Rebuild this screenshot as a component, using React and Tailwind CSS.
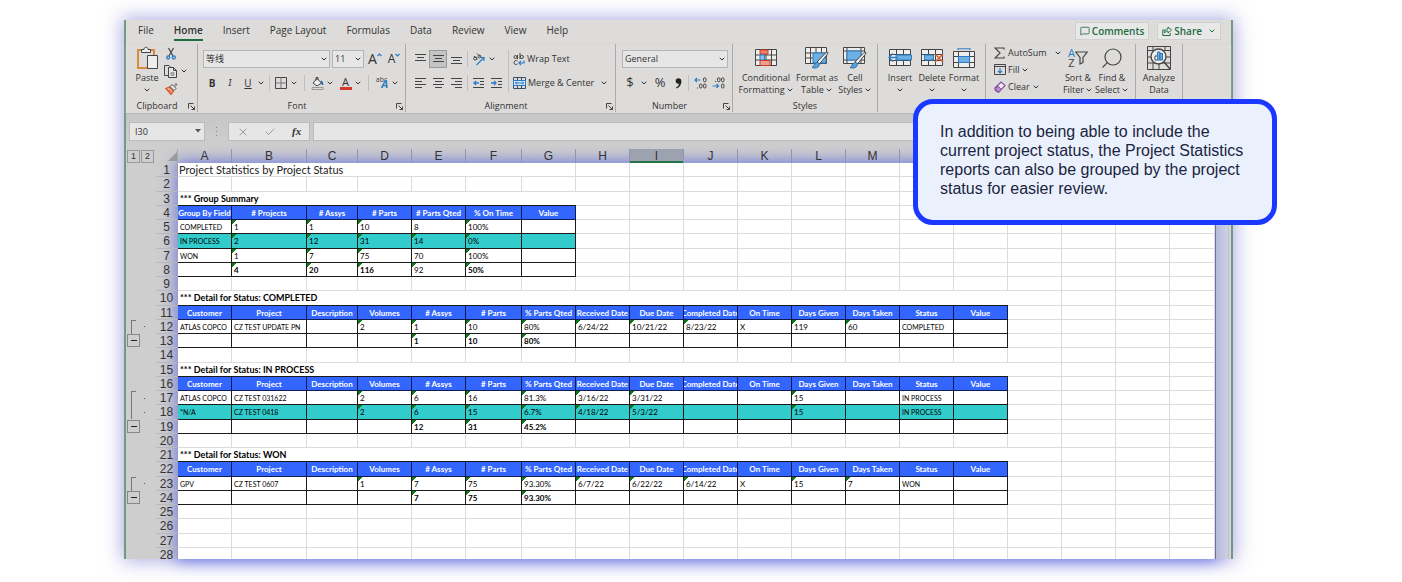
import React from "react";
import clsx from "clsx";
import { ChevronDown, Search, X, Check, MessageSquare } from "lucide-react";

const TABS = ["File", "Home", "Insert", "Page Layout", "Formulas", "Data", "Review", "View", "Help"];

const COLUMNS = "ABCDEFGHIJKLMNOPQRS".split("");

// Letters past this column sit behind the callout
const LAST_LETTER = "M";

const COLUMN_WIDTHS = [
  "w-[54px]", "w-[75px]", "w-[51px]", "w-[54px]", "w-[54px]", "w-[56px]", "w-[54px]",
  "w-[54px]", "w-[54px]", "w-[54px]", "w-[54px]", "w-[54px]", "w-[54px]", "w-[54px]",
  "w-[54px]", "w-[54px]", "w-[54px]", "w-[54px]", "w-auto",
];

const SUMMARY_HEAD = ["Group By Field", "# Projects", "# Assys", "# Parts", "# Parts Qted", "% On Time", "Value"];

const DETAIL_HEAD = [
  "Customer", "Project", "Description", "Volumes", "# Assys", "# Parts", "% Parts Qted", "Received Date",
  "Due Date", "Completed Date", "On Time", "Days Given", "Days Taken", "Status", "Value",
];

// A leading "'" marks a number stored as text, "!" marks bold
const ROWS = [
  { kind: "title", span: 6, text: "Project Statistics by Project Status" },
  { kind: "blank" },
  { kind: "section", span: 7, text: "*** Group Summary" },
  { kind: "head", cells: SUMMARY_HEAD },
  { kind: "data", cells: ["COMPLETED", "'1", "'1", "'10", "8", "'100%", ""] },
  { kind: "data", teal: true, cells: ["IN PROCESS", "'2", "'12", "'31", "'14", "'0%", ""] },
  { kind: "data", cells: ["WON", "'1", "'7", "'75", "70", "'100%", ""] },
  { kind: "data", cells: ["", "'!4", "'!20", "'!116", "'92", "'!50%", ""] },
  { kind: "blank" },
  { kind: "section", span: 15, text: "*** Detail for Status: COMPLETED" },
  { kind: "head", cells: DETAIL_HEAD },
  { kind: "data", outline: "start", cells: ["ATLAS COPCO", "CZ TEST UPDATE PN", "", "'2", "'1", "'10", "'80%", "'6/24/22", "'10/21/22", "'8/23/22", "X", "'119", "'60", "COMPLETED", ""] },
  { kind: "data", outline: "end", cells: ["", "", "", "", "'!1", "'!10", "'!80%", "", "", "", "", "", "", "", ""] },
  { kind: "blank" },
  { kind: "section", span: 15, text: "*** Detail for Status: IN PROCESS" },
  { kind: "head", cells: DETAIL_HEAD },
  { kind: "data", outline: "start", cells: ["ATLAS COPCO", "CZ TEST 031622", "", "'2", "'6", "'16", "'81.3%", "'3/16/22", "'3/31/22", "", "", "'15", "", "IN PROCESS", ""] },
  { kind: "data", outline: "middle", teal: true, cells: ["*N/A", "CZ TEST 0418", "", "'2", "'6", "'15", "'6.7%", "'4/18/22", "'5/3/22", "", "", "'15", "", "IN PROCESS", ""] },
  { kind: "data", outline: "end", cells: ["", "", "", "", "'!12", "'!31", "'!45.2%", "", "", "", "", "", "", "", ""] },
  { kind: "blank" },
  { kind: "section", span: 15, text: "*** Detail for Status: WON" },
  { kind: "head", cells: DETAIL_HEAD },
  { kind: "data", outline: "start", cells: ["GPV", "CZ TEST 0607", "", "'1", "'7", "'75", "'93.30%", "'6/7/22", "'6/22/22", "'6/14/22", "X", "'15", "'7", "WON", ""] },
  { kind: "data", outline: "end", cells: ["", "", "", "", "'!7", "'!75", "'!93.30%", "", "", "", "", "", "", "", ""] },
  { kind: "blank" },
  { kind: "blank" },
  { kind: "blank" },
  { kind: "blank" },
];

/* ---------- Icons ---------- */

const Chevron = ({ className }) => (
  <ChevronDown className={clsx("w-2 h-2 shrink-0", className)} strokeWidth={3} />
);

const Svg = ({ w, h, children }) => (
  <svg width={w} height={h} viewBox={`0 0 ${w} ${h}`} fill="none" stroke="#444" className="shrink-0">
    {children}
  </svg>
);

const PasteIcon = () => (
  <Svg w={22} h={24}>
    <path d="M7 4H2v18h9M14 4h4v5" stroke="#d98a3d" strokeWidth="2" />
    <path d="M5.500 6.500v-3h2.500c0-3 4-3 4 0h2.500v3z" fill="#eee" />
    <path d="M11.500 9.500h10v13h-10z" fill="#eee" />
  </Svg>
);

const CutIcon = () => (
  <Svg w={10} h={13}>
    <path d="M2.500 1l4.500 8M7.500 1L3 9" strokeWidth="1.200" />
    <circle cx="2.200" cy="10.500" r="1.500" stroke="#2b7cc4" strokeWidth="1.300" />
    <circle cx="7.800" cy="10.500" r="1.500" stroke="#2b7cc4" strokeWidth="1.300" />
  </Svg>
);

const CopyIcon = () => (
  <Svg w={14} h={13}>
    <path d="M4.500 10.500h-4v-10H5l2 2" />
    <path d="M4.500 2.500h5l3 3v7h-8zM9.500 2.500v3h3" fill="#e6e6e6" />
    <path d="M6.500 8h4M6.500 10h4" strokeWidth=".8" />
  </Svg>
);

const BrushIcon = () => (
  <Svg w={13} h={12}>
    <path d="M.8 5.500L4.500 4l4 4-2.500 3.500z" fill="#f0b090" stroke="#d9541e" strokeWidth="1.200" />
    <path d="M3 8.500l2-1.500M4.500 10l1.500-2" stroke="#d9541e" />
    <path d="M5 3.500l4 4 2-2-1.500-1.500L12 1.500 11 .6 8.500 3 7 1.700z" fill="#eee" stroke="#555" />
  </Svg>
);

const GrowFont = ({ up }) => (
  <span className="flex items-start text-[#333]">
    <span className={up ? "text-[14px] leading-4" : "text-[12px] leading-4"}>A</span>
    <svg width="5" height="4" viewBox="0 0 5 4" fill="none" stroke="#2b7cc4" className="mt-0.5">
      <path d={up ? "M.5 3l2-2 2 2" : "M.5 1l2 2 2-2"} strokeWidth="1.200" />
    </svg>
  </span>
);

const BordersIcon = () => (
  <Svg w={12} h={12}>
    <path d="M.5.5h11v11H.5z" />
    <path d="M6 .5v11M.5 6h11" stroke="#777" />
  </Svg>
);

const FillColorIcon = () => (
  <Svg w={13} h={13}>
    <path d="M6 1.500L10.500 6 6 9 2 6z" fill="#eee" />
    <path d="M5 3.500V.5h2v2.500" />
    <path d="M10 4c1 1.500 2 2.500 1.500 4" stroke="#2b5f9e" strokeWidth="1.800" />
    <path d="M1 10.500h11v2H1z" fill="#ddd" stroke="#888" strokeWidth=".8" />
  </Svg>
);

const PhoneticIcon = () => (
  <span className="flex items-start text-[#444]">
    <span className="text-[7px] leading-2">abc</span>
    <span className="-ml-1.5 mt-0.5 text-[11px] leading-3 italic font-bold text-[#2b7cc4]">A</span>
  </span>
);

const LINES = {
  top: "M0 1.500h11M2 4.500h7M0 7.500h11",
  middle: "M0 2.500h11M2 5.500h7M0 8.500h11",
  bottom: "M0 4.500h11M2 7.500h7M0 10.500h11",
  left: "M0 1.500h11M0 4.500h7M0 7.500h11M0 10.500h7",
  center: "M0 1.500h11M2 4.500h7M0 7.500h11M2 10.500h7",
  right: "M0 1.500h11M4 4.500h7M0 7.500h11M4 10.500h7",
};

const LinesIcon = ({ type }) => (
  <Svg w={11} h={12}>
    <path d={LINES[type]} />
  </Svg>
);

const IndentIcon = ({ out }) => (
  <Svg w={12} h={12}>
    <path d="M0 1.500h11M7 4.500h4M7 7.500h4M0 10.500h11" />
    <path
      d={out ? "M6 6H1M3 4L1 6l2 2" : "M0 6h5M3 4l2 2-2 2"}
      stroke="#2b7cc4"
      strokeWidth="1.300"
    />
  </Svg>
);

const OrientationIcon = () => (
  <Svg w={14} h={13}>
    <circle cx="3.200" cy="5.500" r="1.600" />
    <path d="M2 3l3.500 3.500M5 .5l4 4" />
    <circle cx="7.500" cy="3.500" r="1.400" />
    <path d="M4.500 12L12 4.500M8.500 4.500H12V8" stroke="#2b7cc4" strokeWidth="1.200" />
  </Svg>
);

const WrapIcon = () => (
  <Svg w={12} h={13}>
    <circle cx="2.500" cy="4" r="1.500" />
    <path d="M4.500 2v4M7 0v6M4.500 8C3 7 1 7.500 1 9.500s2 2.500 3.500 1.500" />
    <circle cx="8.800" cy="4" r="1.600" />
    <path d="M11 7.500v2.500H6M8 8l-2 2 2 2" stroke="#2b7cc4" strokeWidth="1.200" />
  </Svg>
);

const MergeIcon = () => (
  <Svg w={13} h={12}>
    <path d="M.5.5h12v11H.5zM4.500.5v3M8.500.5v3M4.500 8.500v3M8.500 8.500v3" stroke="#3b4f66" />
    <path d="M.5 3.500h12v5H.5z" fill="#d8e8f6" stroke="#2b7cc4" />
    <path d="M2 6h9M4 4.500L2.500 6 4 7.500M9 4.500L10.500 6 9 7.500" stroke="#2b7cc4" />
  </Svg>
);

const DecimalIcon = ({ more }) => (
  <Svg w={13} h={12}>
    <path
      d={more ? "M6.500 3H.8M3 1L1 3l2 2" : "M.5 9h6M4.500 7l2 2-2 2"}
      stroke="#2b7cc4"
      strokeWidth="1.200"
    />
    <rect x="9.500" y=".8" width="2.500" height="4" rx="1.200" />
    <rect x="9.500" y="7" width="2.500" height="4" rx="1.200" />
    {more ? <rect x="5.500" y="7" width="2.500" height="4" rx="1.200" /> : <rect x="5.500" y=".8" width="2.500" height="4" rx="1.200" />}
    <path d={more ? "M3 11h1" : "M3 4.500h1"} />
  </Svg>
);

const GRID = "M.5.5h21v16H.5zM.5 6h21M.5 11h21M5.500.5v16M11 .5v16M16.500.5v16";

const ConditionalIcon = () => (
  <Svg w={22} h={18}>
    <path d={GRID} fill="#eee" />
    <path d="M5 1h8v4H5z" fill="#e8836f" stroke="#cf3a24" />
    <path d="M5 6h4.500v5H5z" fill="#8fc1ea" stroke="#2b7cc4" />
    <path d="M5 11.500h10v5H5z" fill="#e8a08f" stroke="#cf3a24" />
  </Svg>
);

const BrushOverlay = () => (
  <>
    <path d="M12 15L21 5.500c1.500-1.200 2.500 0 1.500 1.500L14.500 17z" fill="#eee" stroke="#444" />
    <path d="M7 20.500c2 0 2-5 5-5s3 3 1 4.500-4 1-6 .5z" fill="#5aa2dc" stroke="#2b6ea8" />
  </>
);

const FormatTableIcon = () => (
  <Svg w={24} h={22}>
    <path d={GRID} fill="#eee" />
    <path d="M8 6h13v10H8z" fill="#6fb0e4" stroke="#2b7cc4" />
    <BrushOverlay />
  </Svg>
);

const CellStylesIcon = () => (
  <Svg w={24} h={22}>
    <path d="M.5.500h21v16H.500zM.500 4h21M.500 13h21M4 .500v16M18 .500v16" fill="#eee" />
    <path d="M4 4h14v9H4z" fill="#6fb0e4" stroke="#2b7cc4" />
    <BrushOverlay />
  </Svg>
);

const InsertIcon = () => (
  <Svg w={24} h={18}>
    <path d="M1.500.5h21v16h-21zM8.500.5v16M15.500.5v16M1.500 5.500h21M1.500 11.500h21" fill="#eee" />
    <path d="M8 6h15.500v5H8z" fill="#6fb0e4" stroke="#2b7cc4" />
    <path d="M10 8.500H1M5 4.500l-4 4 4 4" stroke="#2b7cc4" strokeWidth="1.300" />
  </Svg>
);

const DeleteIcon = () => (
  <Svg w={23} h={18}>
    <path d="M.5.5h21v16H.5zM7.500.5v16M14.500.5v16M.5 5.500h21M.5 11.500h21" fill="#eee" />
    <path d="M3.500 6h9v5h-9z" fill="#6fb0e4" stroke="#2b7cc4" />
    <path d="M14 5l8 8M22 5l-8 8" stroke="#dd5a2b" strokeWidth="1.500" />
  </Svg>
);

const FormatIcon = () => (
  <Svg w={22} h={21}>
    <path d="M5 .8h12M5 0v2M17 0v2" stroke="#2b7cc4" />
    <path d="M.5 3.500h21v16H.5zM5.500 3.500v16M16.500 3.500v16M.5 8.500h21M.5 14.500h21" fill="#eee" />
    <path d="M5.500 8.500h11v6h-11z" fill="#6fb0e4" stroke="#2b7cc4" />
  </Svg>
);

const SumIcon = () => (
  <Svg w={11} h={12}>
    <path d="M10 2.500V1H1l5 5-5 5h9V9.500" strokeWidth="1.200" />
  </Svg>
);

const FillIcon = () => (
  <Svg w={12} h={11}>
    <path d="M.5.500h11v10H.500zM.500 2.500h11" />
    <path d="M6 4v5M4 7l2 2 2-2" stroke="#2b7cc4" strokeWidth="1.200" />
  </Svg>
);

const EraserIcon = () => (
  <Svg w={12} h={12}>
    <path d="M1 7l6-6 4 3.500-6 6.500H3.500L1 9z" fill="#eee" stroke="#8a4aa0" strokeWidth="1.200" />
    <path d="M1.500 7.500L4 5l3.500 3.500L5 11H3.500z" fill="#b98cc8" stroke="#8a4aa0" />
  </Svg>
);

const SortIcon = () => (
  <span className="flex items-center">
    <span className="flex flex-col text-[11px] leading-[10px]">
      <span className="text-[#2b7cc4]">A</span>
      <span className="text-[#444]">Z</span>
    </span>
    <Svg w={13} h={14}>
      <path d="M.8 1h11.400L8 6.500v5L5 13V6.500z" strokeWidth="1.200" />
    </Svg>
  </span>
);

const AnalyzeIcon = () => (
  <Svg w={24} h={24}>
    <path d="M.5.5h23v23H.500zM.5 4.500h23M.500 11h23M.500 17h23M6 17v6M12 17v6M6 .5v4M18 .5v4" />
    <circle cx="11.500" cy="10.500" r="7.500" fill="#eee" strokeWidth="1.300" />
    <path d="M8 10h2.500v4H8z" fill="#fff" />
    <path d="M10.500 6h2.500v8h-2.500z" fill="#6fb0e4" stroke="#2b7cc4" />
    <path d="M13 7.500h2.500V14H13z" fill="#6fb0e4" stroke="#2b6ea8" />
    <path d="M17 16l6 7" strokeWidth="1.500" />
  </Svg>
);

const ShareIcon = () => (
  <svg width="10" height="10" viewBox="0 0 10 10" fill="none" stroke="currentColor" className="shrink-0">
    <path d="M3 4H.8v5.500h7.400V7" />
    <path d="M2.500 7c0-3 1.500-4 3.500-4V1l3.500 3L6 7V5C4.500 5 3.500 5.500 2.500 7z" strokeWidth=".9" />
  </svg>
);

const LauncherIcon = () => (
  <Svg w={7} h={7}>
    <path d="M.5 5.500v-5h5M2.500 2.500l4 4M6.500 3.500v3h-3" />
  </Svg>
);

/* ---------- Ribbon ---------- */

const Divider = ({ className }) => <span className={clsx("w-px shrink-0 bg-[#bfbfbf]", className)} />;

const Group = ({ label, launcher, className, children }) => (
  <section className={clsx("flex flex-col h-[68px] shrink-0 border-r border-[#aaa]", className)}>
    <div className="flex h-14">{children}</div>
    <div className="flex items-center h-3 text-[9px] leading-3">
      <span className="flex-1 text-center">{label}</span>
      {launcher && (
        <button aria-label={`${label} settings`} className="w-[9px]">
          <LauncherIcon />
        </button>
      )}
    </div>
  </section>
);

const BigButton = ({ icon, lines, className }) => (
  <button className={clsx("flex flex-col items-center shrink-0 text-[9px] leading-3 whitespace-nowrap", className)}>
    <span className="flex items-center justify-center h-7">{icon}</span>
    <span>{lines[0]}</span>
    <span className="flex items-center gap-px h-3">
      {lines[1]}
      {lines[2] !== "plain" && <Chevron />}
    </span>
  </button>
);

const IconButton = ({ label, className, children }) => (
  <button aria-label={label} className={clsx("flex items-center justify-center shrink-0 h-[18px]", className)}>
    {children}
  </button>
);

const SelectBox = ({ label, value, className }) => (
  <label className={clsx("relative block h-[18px]", className)}>
    <select
      aria-label={label}
      className="block appearance-none w-full h-full pl-0.5 border border-[#b5b5b5] bg-[#e6e6e6] text-[9px] leading-4"
      defaultValue={value}
    >
      <option>{value}</option>
    </select>
    <Chevron className="absolute right-0.5 top-[5px] pointer-events-none" />
  </label>
);

const Ribbon = () => (
  <div className="flex h-[70px] border-b border-[#b8b8b8] shadow-[0_1px_2px_#aaa]">
    <Group label="Clipboard" launcher className="w-[72px]">
      <BigButton className="w-[42px]" icon={<PasteIcon />} lines={["Paste"]} />
      <div className="flex flex-col">
        <IconButton label="Cut" className="w-[6px]"><CutIcon /></IconButton>
        <div className="flex items-center">
          <IconButton label="Copy" className="w-[6px]"><CopyIcon /></IconButton>
          <Chevron className="ml-1.5" />
        </div>
        <IconButton label="Format Painter" className="w-[6px]"><BrushIcon /></IconButton>
      </div>
    </Group>

    <Group label="Font" launcher className="w-[208px]">
      <div className="flex flex-col gap-1.5 pt-1.5 pl-[5px]">
        <div className="flex items-center gap-0.5">
          <SelectBox label="Font" value="等线" className="w-[127px]" />
          <SelectBox label="Font size" value="11" className="w-8" />
          <IconButton label="Increase font size" className="w-[18px]"><GrowFont up /></IconButton>
          <IconButton label="Decrease font size" className="w-4"><GrowFont /></IconButton>
        </div>
        <div className="flex items-center">
          <IconButton label="Bold" className="w-[18px] text-[10px] font-bold">B</IconButton>
          <IconButton label="Italic" className="w-[18px] text-[10px] italic font-serif">I</IconButton>
          <IconButton label="Underline" className="w-[18px] text-[10px] underline">U</IconButton>
          <Chevron />
          <Divider className="h-4 mx-1" />
          <IconButton label="Borders" className="w-[14px]"><BordersIcon /></IconButton>
          <Chevron className="ml-0.5" />
          <Divider className="h-4 mx-1.5" />
          <IconButton label="Fill color" className="w-[13px]"><FillColorIcon /></IconButton>
          <Chevron className="ml-0.5" />
          <IconButton label="Font color" className="w-[13px] ml-[5px] flex-col">
            <span className="text-[11px] leading-[10px]">A</span>
            <span className="w-3 h-[3px] bg-[#d8372b]" />
          </IconButton>
          <Chevron className="ml-0.5" />
          <Divider className="h-4 mx-1.5" />
          <IconButton label="Phonetic guide" className="w-[14px]"><PhoneticIcon /></IconButton>
          <Chevron className="ml-0.5" />
        </div>
      </div>
    </Group>

    <Group label="Alignment" launcher className="w-[210px]">
      <div className="flex flex-col gap-1.5 pt-1.5 pl-[5px]">
        <div className="flex items-center">
          <IconButton label="Top align" className="w-[18px]"><LinesIcon type="top" /></IconButton>
          <IconButton label="Middle align" className="w-[18px] border border-[#999] bg-[#c4c4c4]">
            <LinesIcon type="middle" />
          </IconButton>
          <IconButton label="Bottom align" className="w-[18px]"><LinesIcon type="bottom" /></IconButton>
          <Divider className="h-4 mx-0.5" />
          <IconButton label="Orientation" className="w-[18px]"><OrientationIcon /></IconButton>
          <Chevron />
        </div>
        <div className="flex items-center">
          <IconButton label="Align left" className="w-[18px]"><LinesIcon type="left" /></IconButton>
          <IconButton label="Center" className="w-[18px]"><LinesIcon type="center" /></IconButton>
          <IconButton label="Align right" className="w-[18px]"><LinesIcon type="right" /></IconButton>
          <Divider className="h-4 mx-0.5" />
          <IconButton label="Decrease indent" className="w-[18px]"><IndentIcon out /></IconButton>
          <IconButton label="Increase indent" className="w-[18px]"><IndentIcon /></IconButton>
        </div>
      </div>
      <Divider className="h-[42px] mt-1.5 ml-0.5" />
      <div className="flex flex-col gap-1.5 pt-1.5 pl-1 text-[9px] whitespace-nowrap">
        <button className="flex items-center gap-0.5 h-[18px]"><WrapIcon />Wrap Text</button>
        <button className="flex items-center gap-0.5 h-[18px]">
          <MergeIcon />Merge &amp; Center<Chevron className="ml-1" />
        </button>
      </div>
    </Group>

    <Group label="Number" launcher className="w-[117px]">
      <div className="flex flex-col gap-1.5 pt-1.5 pl-1.5">
        <SelectBox label="Number format" value="General" className="w-[106px]" />
        <div className="flex items-center">
          <IconButton label="Currency" className="w-4 text-[13px]">$</IconButton>
          <Chevron className="ml-0.5" />
          <IconButton label="Percent" className="w-6 text-[13px]">%</IconButton>
          <IconButton label="Comma style" className="w-3">
            <svg width="7" height="11" viewBox="0 0 7 11" fill="#222">
              <circle cx="3.500" cy="3" r="2.800" />
              <path d="M6.300 3c.2 4-2 6.500-4.800 7.500L1 9.500C3 8.500 4 7 4 5z" />
            </svg>
          </IconButton>
          <Divider className="h-4 ml-1 mr-0.5" />
          <IconButton label="Increase decimal" className="w-[18px]"><DecimalIcon more /></IconButton>
          <IconButton label="Decrease decimal" className="w-[18px]"><DecimalIcon /></IconButton>
        </div>
      </div>
    </Group>

    <Group label="Styles" className="w-[145px]">
      <BigButton className="w-[66px]" icon={<ConditionalIcon />} lines={["Conditional", "Formatting"]} />
      <BigButton className="w-[36px]" icon={<FormatTableIcon />} lines={["Format as", "Table"]} />
      <BigButton className="w-[40px]" icon={<CellStylesIcon />} lines={["Cell", "Styles"]} />
    </Group>

    <Group className="w-[108px]">
      <BigButton className="ml-1.5 w-8" icon={<InsertIcon />} lines={["Insert"]} />
      <BigButton className="w-8" icon={<DeleteIcon />} lines={["Delete"]} />
      <BigButton className="w-8" icon={<FormatIcon />} lines={["Format"]} />
    </Group>

    <Group className="w-[150px]">
      <div className="flex flex-col w-[74px] pl-2 text-[9px] whitespace-nowrap">
        <button className="flex items-center gap-[3px] h-[17px]"><SumIcon />AutoSum<Chevron className="ml-1" /></button>
        <button className="flex items-center gap-0.5 h-[17px]"><FillIcon />Fill<Chevron /></button>
        <button className="flex items-center gap-0.5 h-[17px]"><EraserIcon />Clear<Chevron /></button>
      </div>
      <BigButton className="w-[36px]" icon={<SortIcon />} lines={["Sort &", "Filter"]} />
      <BigButton
        className="w-[32px]"
        icon={<Search className="w-6 h-6 -scale-x-100 text-[#444]" strokeWidth={1.2} />}
        lines={["Find &", "Select"]}
      />
    </Group>

    <Group className="w-[47px]">
      <BigButton className="w-full" icon={<AnalyzeIcon />} lines={["Analyze", "Data", "plain"]} />
    </Group>
  </div>
);

const TabBar = () => (
  <nav className="flex items-start h-6 pt-0.5 pl-3 pr-2.5 text-[10px]">
    <div className="flex gap-5">
      {TABS.map((tab) => (
        <a
          key={tab}
          href="#"
          className={clsx(
            "leading-[17px] border-b-2 whitespace-nowrap",
            tab === "Home" ? "font-semibold border-[#1e6b41]" : "border-transparent"
          )}
        >
          {tab}
        </a>
      ))}
    </div>
    <div className="flex gap-2 ml-auto font-semibold text-[#1e6b41]">
      <button className="flex items-center gap-0.5 h-[18px] px-1 border border-[#d0d0d0] bg-[#e8e8e8]">
        <MessageSquare className="w-2.5 h-2.5" />Comments
      </button>
      <button className="flex items-center gap-0.5 h-[18px] px-1 border border-[#d0d0d0] bg-[#e8e8e8]">
        <ShareIcon />Share<Chevron className="ml-1" />
      </button>
    </div>
  </nav>
);

const FormulaBar = () => (
  <div className="flex items-center h-[35px] pl-[3px] pr-4 bg-gradient-to-b from-[#c6c6c6] to-[#cfcfcf] text-[9px]">
    <label className="relative block">
      <input
        aria-label="Name box"
        defaultValue="I30"
        className="block w-[76px] h-[19px] pl-[5px] border border-[#bbb] bg-[#e6e6e6]"
      />
      <svg width="6" height="4" viewBox="0 0 6 4" className="absolute right-1 top-[7px]">
        <path d="M0 0h6L3 3.500z" fill="#555" />
      </svg>
    </label>
    <svg width="23" height="9" viewBox="0 0 23 9" fill="#888">
      <path d="M11 0h1v1h-1zM11 4h1v1h-1zM11 8h1v1h-1z" />
    </svg>
    <div className="flex items-center justify-around w-[82px] h-[19px] border border-[#bbb] bg-[#e6e6e6]">
      <button aria-label="Cancel"><X className="w-3 h-3 text-[#999]" /></button>
      <button aria-label="Enter"><Check className="w-3 h-3 text-[#999]" /></button>
      <button aria-label="Insert function" className="font-['Liberation_Serif'] text-[11px] italic font-bold">fx</button>
    </div>
    <input
      aria-label="Formula"
      className="flex-1 min-w-0 h-[19px] ml-[3px] border border-[#bbb] bg-[#e6e6e6]"
    />
  </div>
);

/* ---------- Sheet ---------- */

const OutlineCell = ({ type }) => (
  <td className="p-0 pl-px align-top">
    {type === "end" ? (
      <button aria-label="Collapse group" className="flex items-center justify-center w-[13px] h-[13px] border border-[#888]">
        <span className="w-1.5 h-px bg-[#222]" />
      </button>
    ) : (
      type && (
        <div className="flex items-center h-[14px] pl-1">
          <span className={clsx("w-[5px] h-full border-l border-[#777]", type === "start" && "border-t")} />
          <span className="w-px h-px ml-2 bg-[#555]" />
        </div>
      )
    )}
  </td>
);

const DataCell = ({ value, teal }) => {
  const flagged = value.startsWith("'");
  const bold = value.includes("!");
  const isName = /^[A-Z*]{2}/.test(value);
  return (
    <td
      className={clsx(
        "p-0 pt-px pl-0.5 border-r border-b border-[#1a1a1a] overflow-hidden whitespace-nowrap",
        isName && "text-[7px]",
        teal && "bg-[#33cccc]",
        bold && "font-bold",
        flagged && "bg-[linear-gradient(135deg,#0a7a14_3px,transparent_3px)]"
      )}
    >
      {value.replace(/['!]/g, "")}
    </td>
  );
};

const SheetRow = ({ row, index }) => {
  const used = row.cells ? row.cells.length : row.span || 0;
  return (
    <tr>
      <OutlineCell type={row.outline} />
      <th className="p-0 pt-px border-r border-b border-b-[#b9b9b9] border-r-[#9a9ec4] font-['Liberation_Sans'] text-[12px] leading-3 font-normal text-[#333]">
        {index + 1}
      </th>
      {row.kind === "title" && (
        <td colSpan={row.span} className="p-0 pl-px border-b border-[#dcdcdc] text-[11px] whitespace-nowrap text-[#222]">
          {row.text}
        </td>
      )}
      {row.kind === "section" && (
        <td colSpan={row.span} className="p-0 pt-px pl-0.5 border-b border-[#1a1a1a] text-[9px] font-bold whitespace-nowrap">
          {row.text}
        </td>
      )}
      {row.kind === "head" &&
        row.cells.map((text) => (
          <th key={text} className="p-0 pt-px border-r border-b border-[#101c50] bg-[#3366ff] text-white">
            <div className="flex justify-center overflow-hidden whitespace-nowrap">{text}</div>
          </th>
        ))}
      {row.kind === "data" && row.cells.map((value, i) => <DataCell key={i} value={value} teal={row.teal} />)}
      {COLUMNS.slice(used).map((col) => (
        <td key={col} className="p-0 border-r border-b border-[#dcdcdc]" />
      ))}
    </tr>
  );
};

const Sheet = () => (
  <div className="relative flex-1 min-h-0 flex bg-[#cecece]">
    {/* glow around the cell area */}
    <div className="absolute left-[52px] right-4 top-[14px] bottom-0 bg-white shadow-[0_0_14px_2px_rgba(60,75,225,0.65)]" />
    <div className="relative flex-1 overflow-hidden">
      <table className="w-full h-[413px] table-fixed border-separate border-spacing-0 font-['Lato'] text-[8px] leading-3 text-black">
        <colgroup>
          <col className="w-[30px]" />
          <col className="w-[22px]" />
          {COLUMN_WIDTHS.map((width, i) => (
            <col key={i} className={width} />
          ))}
        </colgroup>
        <thead>
          <tr className="font-['Liberation_Sans'] text-[12px] leading-[14px] text-[#333]">
            <td className="p-0 pl-px">
              <div className="flex gap-px text-[9px] leading-[11px]">
                <button className="w-[13px] border border-[#999]">1</button>
                <button className="w-[13px] border border-[#999]">2</button>
              </div>
            </td>
            <td className="p-0 border-r border-[#aaa]">
              <svg width="9" height="9" viewBox="0 0 9 9" className="ml-3">
                <path d="M9 0v9H0z" fill="#9a9a9a" />
              </svg>
            </td>
            {COLUMNS.map((col) => (
              <th
                key={col}
                className={clsx(
                  "p-0 border-r border-[#8f93b8] font-normal",
                  col === "I" && "bg-[#9da2b0] shadow-[inset_0_-2px_0_#217346]"
                )}
              >
                {col <= LAST_LETTER && col}
              </th>
            ))}
          </tr>
        </thead>
        <tbody>
          {ROWS.map((row, i) => (
            <SheetRow key={i} row={row} index={i} />
          ))}
        </tbody>
      </table>
    </div>
    <div className="relative w-4 flex justify-between border-l border-[#6a70a8] bg-gradient-to-r from-[#b4b9e4] to-[#d6d6e0]">
      <Divider className="h-full ml-px bg-[#777ca8]" />
      <Divider className="h-full mr-0.5 bg-[#777]" />
    </div>
  </div>
);

const Callout = () => (
  <aside className="absolute top-[79px] -right-[46px] w-[364px] h-[126px] px-[22px] pt-[18px] rounded-[20px] border-[5px] border-[#1a38ff] bg-[#eaf1fd] font-['Liberation_Sans'] text-[16px] leading-[19px] text-[#1b2440]">
    In addition to being able to include the current project status, the Project Statistics reports can also be
    grouped by the project status for easier review.
  </aside>
);

const App = () => {
  return (
    <div className="h-screen pt-5 pb-[23px] pl-[124px] pr-[169px] bg-white overflow-hidden font-['Open_Sans','Noto_Sans_CJK_SC',sans-serif] text-[#333]">
      <main className="relative flex flex-col h-full border-l-2 border-r-2 border-[#6f9c80] bg-[#dddcda] shadow-[0_0_18px_2px_rgba(90,90,200,0.5)]">
        <TabBar />
        <Ribbon />
        <FormulaBar />
        <Sheet />
        <Callout />
      </main>
    </div>
  );
};

export default App;
